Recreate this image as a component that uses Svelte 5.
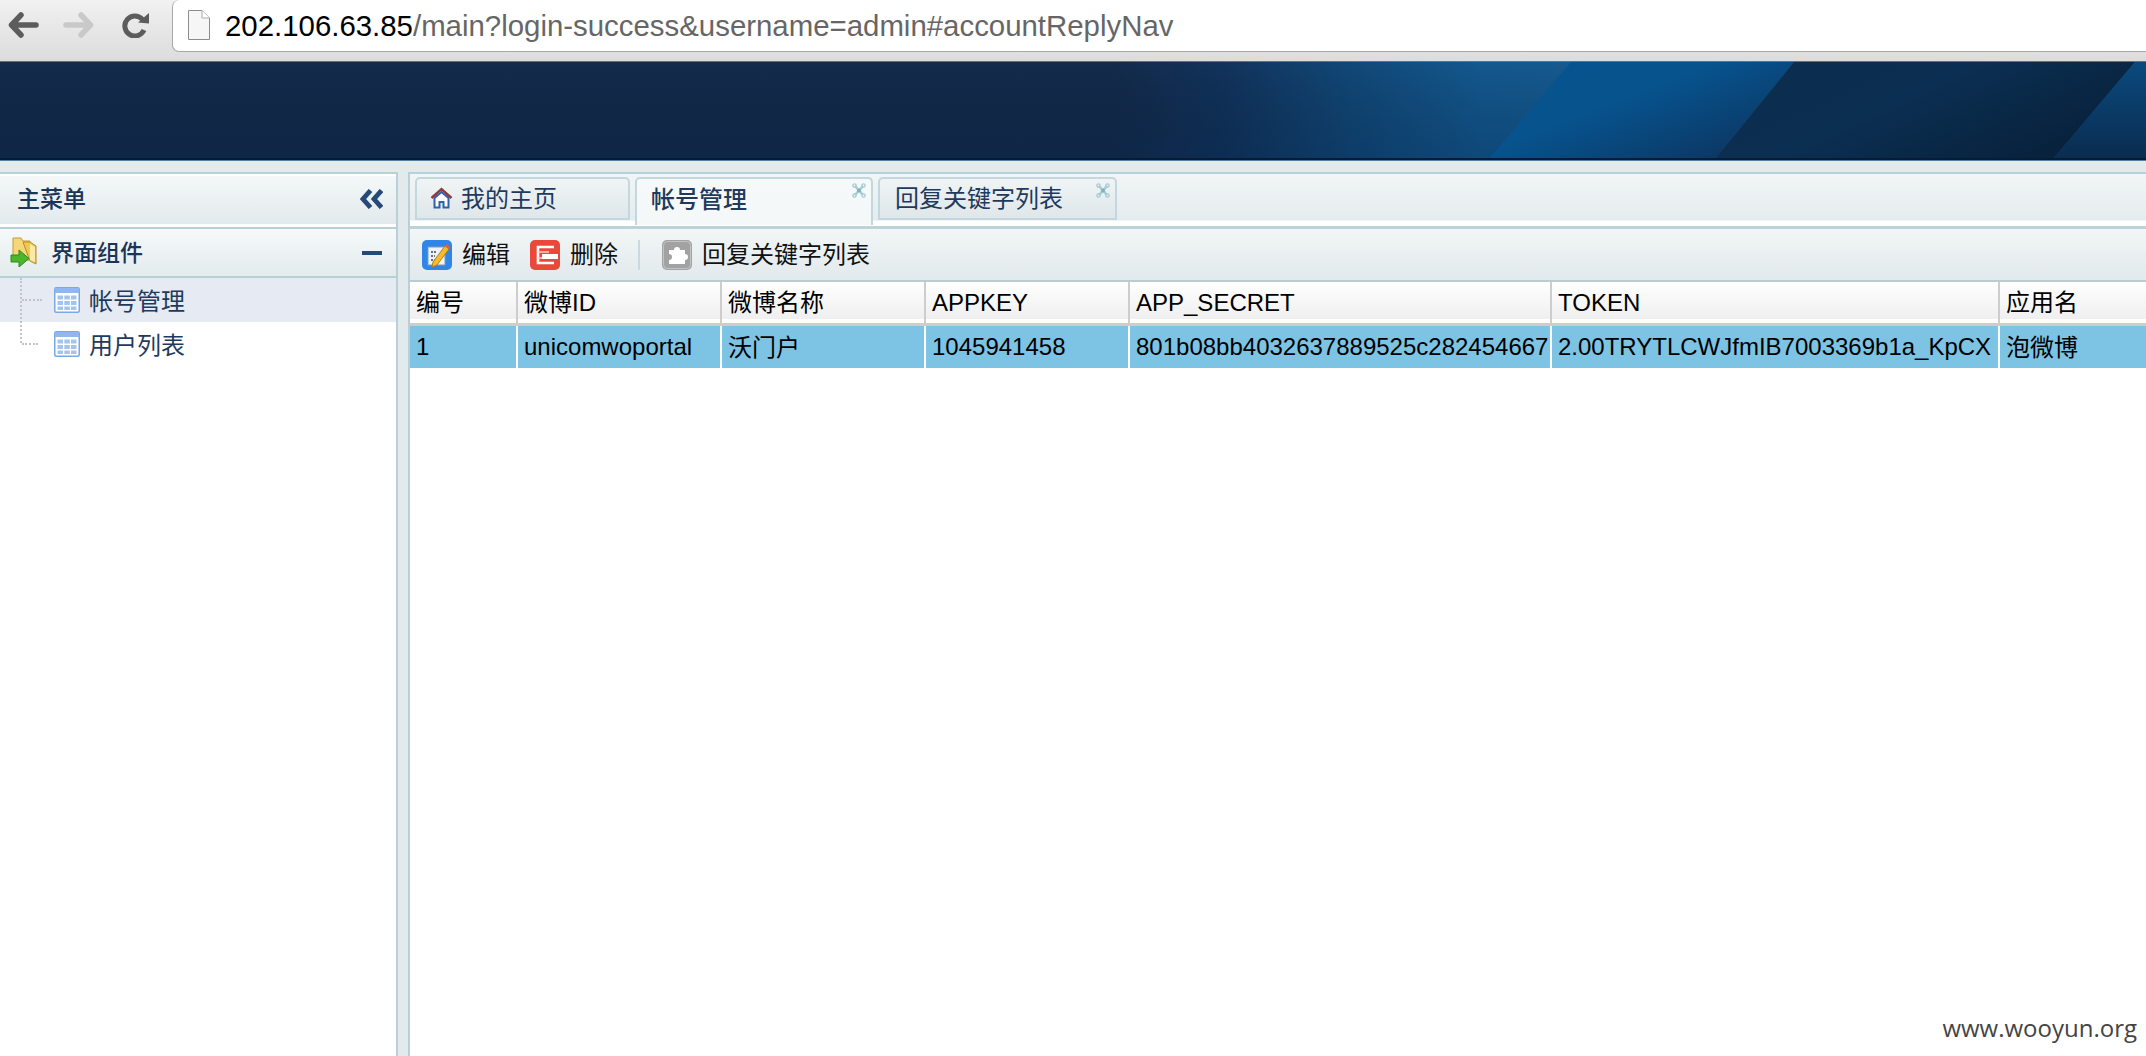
<script>
  const columns = [
    { title: "编号", value: "1", width: 108 },
    { title: "微博ID", value: "unicomwoportal", width: 204 },
    { title: "微博名称", value: "沃门户", width: 204 },
    { title: "APPKEY", value: "1045941458", width: 204 },
    { title: "APP_SECRET", value: "801b08bb4032637889525c282454667", width: 422 },
    { title: "TOKEN", value: "2.00TRYTLCWJfmIB7003369b1a_KpCX", width: 448 },
    { title: "应用名", value: "泡微博", width: 146 }
  ]
  const gridCols = columns.map((c) => c.width + "px").join(" ")
  // CJK glyphs sit lower than the latin ones in the same line box
  const isCjk = (text) => /^[^\x00-\x7f]+/.test(text)
</script>

{#snippet tableIcon()}
  <svg class="tree-icon" viewBox="0 0 26 26">
    <rect x="0.75" y="0.75" width="24.5" height="24.5" rx="1.5" fill="#fff" stroke="#78a8e8" stroke-width="1.5"/>
    <rect x="1" y="1" width="24" height="5" fill="#8fb8ee"/>
    <g fill="#a3c4ee">
      <rect x="3.500" y="8.500" width="5.500" height="4"/><rect x="10.300" y="8.500" width="5.500" height="4"/><rect x="17" y="8.500" width="5.500" height="4"/>
      <rect x="3.500" y="14" width="5.500" height="4"/><rect x="10.300" y="14" width="5.500" height="4"/><rect x="17" y="14" width="5.500" height="4"/>
      <rect x="3.500" y="19.500" width="5.500" height="3.500"/><rect x="10.300" y="19.500" width="5.500" height="3.500"/><rect x="17" y="19.500" width="5.500" height="3.500"/>
    </g>
  </svg>
{/snippet}

{#snippet closeIcon()}
  <svg class="close" viewBox="0 0 14 15">
    <path d="M3 3 11 12M11 3 3 12" stroke="#a6ccd6" stroke-width="2.600"/>
    <g fill="none" stroke="#a6ccd6" stroke-width="1.400">
      <circle cx="2.500" cy="2.500" r="1.600"/><circle cx="11.500" cy="2.500" r="1.600"/>
      <circle cx="2.500" cy="12.500" r="1.600"/><circle cx="11.500" cy="12.500" r="1.600"/>
    </g>
    <circle cx="7" cy="7.500" r="2" fill="#7fb0bd"/>
  </svg>
{/snippet}

<div class="page">
  <div class="browser">
    <div class="nav-icons">
      <svg class="nav" viewBox="0 0 31 26">
        <path d="M13 3 3.500 13 13 23M4 13H28" fill="none" stroke="#5c5c5c" stroke-width="5.500" stroke-linecap="round" stroke-linejoin="round"/>
      </svg>
      <svg class="nav" viewBox="0 0 31 26">
        <path d="M18 3 27.500 13 18 23M27 13H3" fill="none" stroke="#c9c9c9" stroke-width="5.500" stroke-linecap="round" stroke-linejoin="round"/>
      </svg>
      <svg class="nav reload" viewBox="0 0 28 26">
        <path d="M20.500 7.500A10 10 0 1 0 22 18" fill="none" stroke="#5c5c5c" stroke-width="5"/>
        <path d="M16 10.500 27 1v10.500z" fill="#5c5c5c"/>
      </svg>
    </div>
    <div class="urlbar">
      <svg class="page-icon" viewBox="0 0 22 30">
        <path d="M.5.5H14L21.500 8V29.500H.5z" fill="#f6f6f6" stroke="#8c8c8c"/>
        <path d="M14 .5V8H21.500" fill="#fff" stroke="#aaa"/>
      </svg>
      <span class="url"><span class="host">202.106.63.85</span>/main?login-success&amp;username=admin#accountReplyNav</span>
    </div>
  </div>

  <header class="banner">
    <svg class="banner-art" viewBox="0 0 2146 96" preserveAspectRatio="none">
      <defs>
        <linearGradient id="base" x1="0" x2="1" y1="0" y2="0">
          <stop offset="0" stop-color="#132b4c"/>
          <stop offset="0.52" stop-color="#132b4c"/>
          <stop offset="0.57" stop-color="#11335c"/>
          <stop offset="0.63" stop-color="#114878"/>
          <stop offset="0.69" stop-color="#13588f"/>
          <stop offset="0.74" stop-color="#155a90"/>
        </linearGradient>
        <linearGradient id="shade" x1="0" x2="0" y1="0" y2="1">
          <stop offset="0" stop-color="#000" stop-opacity="0"/>
          <stop offset="1" stop-color="#001a3a" stop-opacity="0.25"/>
        </linearGradient>
        <linearGradient id="band1" x1="0" x2="1" y1="0" y2="0.8">
          <stop offset="0" stop-color="#05538f"/>
          <stop offset="0.45" stop-color="#07538e"/>
          <stop offset="1" stop-color="#0c3560"/>
        </linearGradient>
        <linearGradient id="band2" x1="0" x2="1" y1="0" y2="0.5">
          <stop offset="0" stop-color="#0b2c4c"/>
          <stop offset="0.5" stop-color="#0b2f52"/>
          <stop offset="1" stop-color="#08223d"/>
        </linearGradient>
        <linearGradient id="band3" x1="0" x2="0" y1="0" y2="1">
          <stop offset="0" stop-color="#0a4a7e"/>
          <stop offset="1" stop-color="#0a2c50"/>
        </linearGradient>
      </defs>
      <rect width="2146" height="96" fill="url(#base)"/>
      <rect width="2146" height="96" fill="url(#shade)"/>
      <polygon points="1571,0 1794,0 1716,96 1490,96" fill="url(#band1)"/>
      <polygon points="1794,0 2135,0 2054,96 1716,96" fill="url(#band2)"/>
      <polygon points="2135,0 2146,0 2146,96 2054,96" fill="url(#band3)"/>
    </svg>
  </header>

  <div class="workspace">
    <aside class="sidebar">
      <div class="side-title">
        <span>主菜单</span>
        <svg class="chevrons" viewBox="0 0 23 20">
          <path d="M10.500 1.500 3 10l7.500 8.500M21.500 1.500 14 10l7.500 8.500" fill="none" stroke="#264a78" stroke-width="4.800"/>
        </svg>
      </div>
      <div class="side-group">
        <svg class="folder" viewBox="0 0 28 31">
          <path d="M3 1h8l2 3h7v19H3z" fill="#f5d77a" stroke="#c79a2c"/>
          <path d="M13 5h7l6 4v18l-6-3z" fill="#f0c850" stroke="#b98a24"/>
          <path d="M20 7l5 3v15l-5-2z" fill="#fbe9a8"/>
          <path d="M1 18h8v-5l10 8.500L9 30v-5H1z" fill="#4db52c" stroke="#2c8a1c"/>
        </svg>
        <span class="group-label">界面组件</span>
        <span class="minus"></span>
      </div>
      <div class="tree">
        <span class="tree-line"></span>
        <div class="tree-item selected">
          <span class="branch"></span>
          {@render tableIcon()}
          <span>帐号管理</span>
        </div>
        <div class="tree-item">
          <span class="branch short"></span>
          {@render tableIcon()}
          <span>用户列表</span>
        </div>
      </div>
    </aside>

    <main class="content">
      <div class="tabs">
        <div class="tab home-tab">
          <svg class="home" viewBox="0 0 23 22">
            <path d="M1.500 11 11.500 2l10 9" fill="none" stroke="#8f3a3a" stroke-width="2.400"/>
            <path d="M4.500 11v9.500h5V15h4v5.500h5V11L11.500 5z" fill="#fff" stroke="#2f62a8" stroke-width="2"/>
          </svg>
          <span>我的主页</span>
        </div>
        <div class="tab active">
          <span>帐号管理</span>
          {@render closeIcon()}
        </div>
        <div class="tab reply-tab">
          <span>回复关键字列表</span>
          {@render closeIcon()}
        </div>
      </div>

      <div class="toolbar">
        <button class="tool edit-tool">
          <svg class="tool-icon" viewBox="0 0 30 30">
            <rect width="30" height="30" rx="5" fill="#2f86e6"/>
            <rect x="6" y="7" width="17" height="18" fill="#eef3f8" stroke="#7f9bb8"/>
            <path d="M9 12h6M9 16h4M9 20h4" stroke="#445" stroke-width="1.500" stroke-dasharray="2 1"/>
            <path d="M11 22 23 6l4 3-12 16-5 2z" fill="#f4bb2e" stroke="#b97e12"/>
            <path d="M23 6l1.500-2 4 3-1.500 2z" fill="#e25c4c"/>
          </svg>
          <span>编辑</span>
        </button>
        <button class="tool delete-tool">
          <svg class="tool-icon" viewBox="0 0 30 30">
            <rect width="30" height="30" rx="5" fill="#e8493a"/>
            <path d="M24 7H8v16h16" fill="none" stroke="#fff" stroke-width="2.600"/>
            <path d="M8 12h11M8 18h6" stroke="#fbd0ca" stroke-width="1.500"/>
            <rect x="12" y="14" width="16" height="5" fill="#fff"/>
          </svg>
          <span>删除</span>
        </button>
        <span class="tool-sep"></span>
        <button class="tool reply-tool">
          <svg class="tool-icon" viewBox="0 0 30 30">
            <rect width="30" height="30" rx="5" fill="#a2a2a2"/>
            <rect x="1.500" y="1.500" width="27" height="27" rx="4" fill="none" stroke="#c4c4c4"/>
            <path d="M7 10h5a3 3 0 1 1 6 0h5v4a3 3 0 1 1 0 6v4H7v-4a3 3 0 1 0 0-6z" fill="#fff"/>
          </svg>
          <span>回复关键字列表</span>
        </button>
      </div>

      <div class="table">
        <div class="row head" style="grid-template-columns: {gridCols}">
          {#each columns as col}
            <div class="cell" class:cjk={isCjk(col.title)}>{col.title}</div>
          {/each}
        </div>
        <div class="row selected-row" style="grid-template-columns: {gridCols}">
          {#each columns as col}
            <div class="cell" class:cjk={isCjk(col.value)}>{col.value}</div>
          {/each}
        </div>
      </div>
    </main>
  </div>

  <div class="watermark">www.wooyun.org</div>
</div>

<style>
  :global(*, *::before, *::after) {
    box-sizing: border-box;
  }

  :global(body) {
    margin: 0;
    overflow: hidden;
    font-family: "Liberation Sans", "Noto Sans CJK SC", sans-serif;
  }

  svg {
    display: block;
    flex-shrink: 0;
  }

  .page {
    position: relative;
    width: 2146px;
    height: 1056px;
    display: flex;
    flex-direction: column;
    overflow: hidden;
    background: #fff;
  }

  /* browser chrome */
  .browser {
    height: 62px;
    display: flex;
    align-items: flex-start;
    background: linear-gradient(#f1f1f1, #dcdcdc);
    border-bottom: 1px solid #6f6f6f;
  }

  .nav-icons {
    width: 172px;
    padding: 12px 0 0 8px;
    display: flex;
    gap: 24px;
  }

  .nav {
    width: 31px;
    height: 26px;
  }

  .reload {
    width: 28px;
    margin-left: 4px;
  }

  .urlbar {
    flex: 1;
    height: 52px;
    display: flex;
    align-items: center;
    gap: 15px;
    padding-left: 15px;
    background: #fff;
    border: 1px solid #a8a8a8;
    border-width: 0 0 1px 1px;
    border-bottom-left-radius: 7px;
    border-top-left-radius: 7px;
  }

  .page-icon {
    width: 22px;
    height: 30px;
    margin-bottom: 1px;
  }

  .url {
    font-size: 29.400px;
    color: #666;
    white-space: nowrap;
  }

  .host {
    color: #000;
  }

  .banner {
    height: 99px;
    border-bottom: 1px solid #55809f;
    background: #041c38;
    padding-bottom: 2px;
  }

  .banner-art {
    width: 100%;
    height: 96px;
  }

  /* main area */
  .workspace {
    flex: 1;
    display: flex;
    min-height: 0;
    padding-top: 11px;
    background: #e2eaec;
  }

  .sidebar {
    width: 398px;
    background: #fff;
    border-top: 2px solid #b9d0d8;
    border-right: 2px solid #b9d0d8;
  }

  .side-title {
    height: 53px;
    display: flex;
    align-items: center;
    justify-content: space-between;
    padding: 0 13px 4px 17px;
    font-size: 23px;
    font-weight: 500;
    color: #1b3557;
    background: linear-gradient(#f4f8f8, #e3eaed);
    border-bottom: 3px solid #fff;
    box-shadow: inset 0 2px 0 #fff;
  }

  .chevrons {
    width: 23px;
    height: 20px;
    margin-top: 4px;
  }

  .side-group {
    height: 51px;
    display: flex;
    align-items: center;
    gap: 13px;
    padding: 0 14px 0 10px;
    font-size: 23px;
    font-weight: 500;
    color: #1b3557;
    background: linear-gradient(#f5f9f9, #e4ebee);
    border-top: 2px solid #b9d0d8;
    border-bottom: 2px solid #b9d0d8;
  }

  .group-label {
    padding-bottom: 3px;
  }

  .folder {
    width: 28px;
    height: 31px;
  }

  .minus {
    width: 20px;
    height: 4px;
    margin-left: auto;
    background: #264a78;
  }

  .tree {
    position: relative;
  }

  .tree-line {
    position: absolute;
    left: 20px;
    top: 0;
    height: 65px;
    border-left: 2px dotted #c4c4c4;
  }

  .tree-item {
    height: 44px;
    display: flex;
    align-items: center;
    padding-left: 22px;
    font-size: 24px;
    color: #1f3a5c;
  }

  .tree-item.selected {
    background: #e5eaf3;
  }

  .tree-item > span:last-child {
    padding-bottom: 2px;
  }

  .branch {
    width: 20px;
    margin-right: 12px;
    border-top: 2px dotted #c4c4c4;
  }

  .branch.short {
    width: 16px;
    margin-right: 16px;
  }

  .tree-icon {
    width: 26px;
    height: 26px;
    margin-right: 9px;
  }

  .content {
    flex: 1;
    min-width: 0;
    margin-left: 10px;
    background: #fff;
    border-top: 2px solid #b9d0d8;
    border-left: 2px solid #b9d0d8;
    display: flex;
    flex-direction: column;
  }

  .tabs {
    height: 55px;
    flex-shrink: 0;
    display: flex;
    align-items: flex-start;
    gap: 5px;
    padding: 3px 0 0 5px;
    background: linear-gradient(#f1f5f5 0, #e5ecef 46px, #fff 47px, #fff 100%);
    border-bottom: 3px solid #bcd3da;
  }

  .tab {
    position: relative;
    height: 43px;
    display: flex;
    align-items: center;
    padding-bottom: 5px;
    font-size: 24px;
    color: #1f3a5c;
    background: linear-gradient(#f0f4f5, #dfe7ea);
    border: 2px solid #c3d8de;
    border-radius: 5px 5px 0 0;
  }

  .home-tab {
    width: 215px;
    padding-left: 13px;
    gap: 8px;
  }

  .home {
    width: 23px;
    height: 22px;
    margin-top: 3px;
  }

  .tab.active {
    width: 238px;
    height: 48px;
    padding-left: 14px;
    padding-bottom: 10px;
    font-weight: 500;
    background: linear-gradient(#f6f9f9, #f4f8f8);
    border-bottom: 0;
  }

  .reply-tab {
    width: 239px;
    padding-left: 15px;
  }

  .close {
    position: absolute;
    top: 4px;
    right: 5px;
    width: 14px;
    height: 15px;
  }

  .toolbar {
    height: 53px;
    flex-shrink: 0;
    display: flex;
    align-items: center;
    padding-left: 12px;
    background: linear-gradient(#f2f6f6, #e2e9ec);
    border-bottom: 2px solid #b9ccd4;
  }

  .tool {
    display: flex;
    align-items: center;
    gap: 10px;
    padding: 0;
    border: 0;
    background: transparent;
    font: inherit;
    font-size: 24px;
    color: #111;
  }

  .tool span {
    padding-bottom: 5px;
  }

  .delete-tool {
    margin-left: 20px;
  }

  .tool-icon {
    width: 30px;
    height: 30px;
  }

  .tool-sep {
    width: 2px;
    height: 30px;
    margin: 0 22px 0 20px;
    background: #c8dae0;
  }

  .row {
    display: grid;
  }

  .cell {
    display: flex;
    align-items: center;
    padding-left: 6px;
    padding-right: 4px;
    overflow: hidden;
    white-space: nowrap;
    font-size: 24px;
    color: #000;
  }

  .cell:last-child {
    border-right: 0 !important;
  }

  .cell.cjk {
    padding-bottom: 4px;
  }

  .head {
    height: 44px;
    border-bottom: 3px solid #cdcdcd;
  }

  .head .cell {
    background: linear-gradient(#fff, #efefef 90%, #fff 91%);
    border-right: 2px solid #cdcdcd;
  }

  .selected-row {
    height: 42px;
  }

  .selected-row .cell {
    background: #7cc3e4;
    border-right: 2px solid #fff;
  }

  .watermark {
    position: absolute;
    right: 9px;
    bottom: 12px;
    font-family: "Open Sans", sans-serif;
    font-size: 24px;
    color: #444;
  }
</style>
